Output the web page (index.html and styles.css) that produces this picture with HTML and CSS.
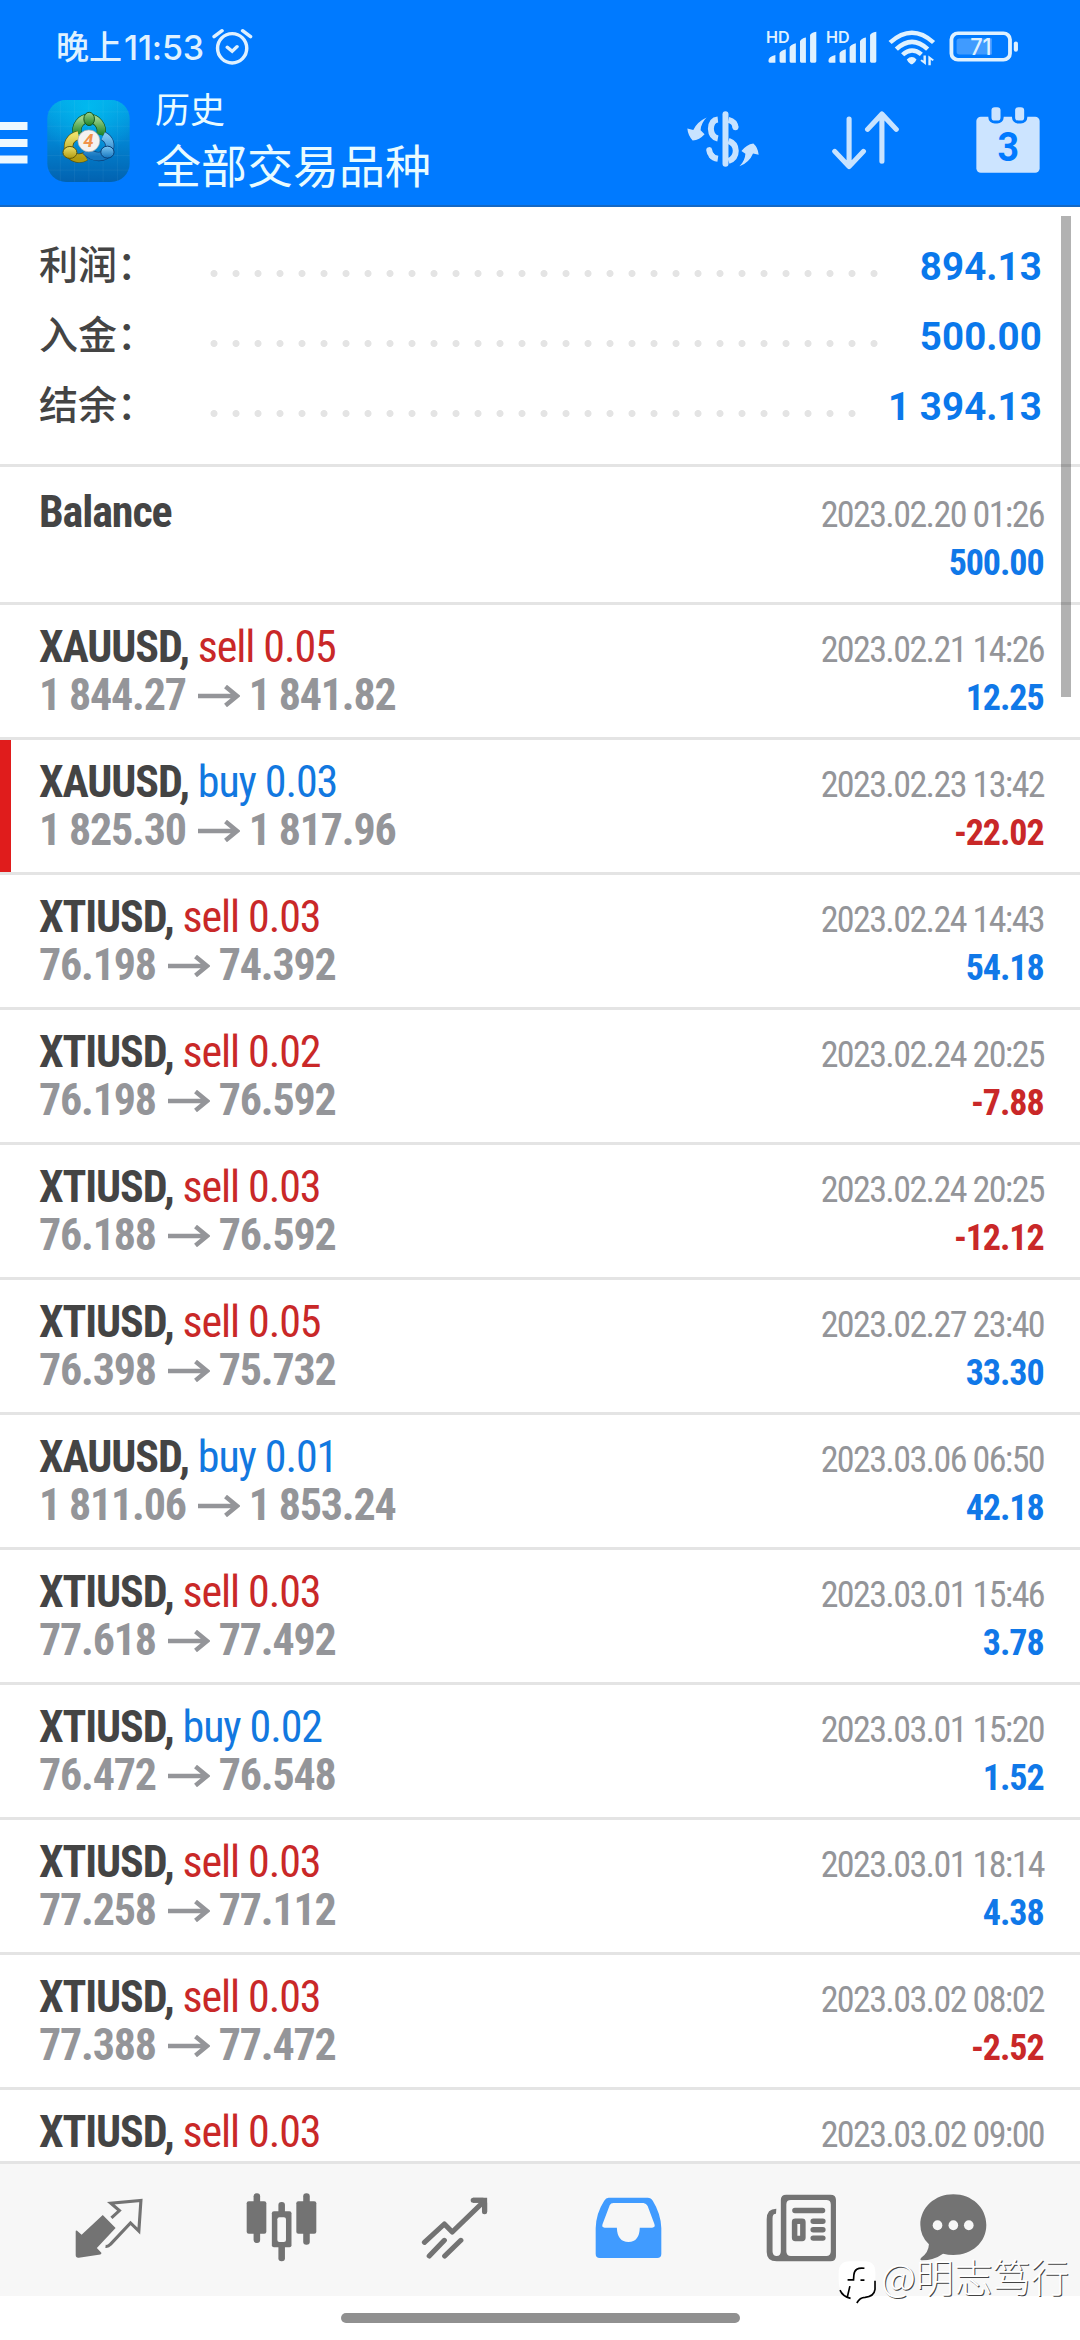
FILE: index.html
```
<!DOCTYPE html>
<html lang="zh-CN">
<head>
<meta charset="utf-8">
<title>历史</title>
<link rel="stylesheet" href="styles.css">
</head>
<body>
<div class="screen">
<header class="header">
  <div class="status">
    <span class="clock"><span>晚上</span><span class="clock-num">11:53</span></span>
    <svg class="alarm" viewBox="614 84 118 114" preserveAspectRatio="none" fill="none" stroke="#dff1ff" stroke-width="10" stroke-linecap="round"><ellipse cx="672" cy="145" rx="42" ry="44"/><path d="M658 142l14 12 14-14M620 110l23-18M725 110l-23-18"/></svg>
    <svg class="signal" viewBox="650 73 150 119" preserveAspectRatio="none" fill="#dff1ff"><text x="653" y="129" font-size="47" textLength="68" lengthAdjust="spacingAndGlyphs">HD</text><path d="M660 182q0-12 20-17v23h-16q-4 0-4-4zM692 160q3-8 18-12v40h-14q-4 0-4-4zM721 142q3-8 18-12v58h-14q-4 0-4-4zM751 124q3-8 17-11v75h-13q-4 0-4-4zM780 106q3-8 18-10v88q0 4-4 4h-10q-4 0-4-4z"/></svg>
    <svg class="signal" viewBox="650 73 150 119" preserveAspectRatio="none" fill="#dff1ff"><text x="653" y="129" font-size="47" textLength="68" lengthAdjust="spacingAndGlyphs">HD</text><path d="M660 182q0-12 20-17v23h-16q-4 0-4-4zM692 160q3-8 18-12v40h-14q-4 0-4-4zM721 142q3-8 18-12v58h-14q-4 0-4-4zM751 124q3-8 17-11v75h-13q-4 0-4-4zM780 106q3-8 18-10v88q0 4-4 4h-10q-4 0-4-4z"/></svg>
    <svg class="wifi" viewBox="1008 86 138 112" preserveAspectRatio="none" fill="none" stroke="#dff1ff" stroke-width="13"><path d="M1014 127q63-59 125 0M1032 147q45-44 90 0M1050 164q26-25 54-1"/><path fill="#dff1ff" stroke="none" d="M1062 178q15-14 28 0-3 8-11 14-3 2-6 0-8-6-11-14zM1117 166v29l-16-13 4-4 5 4v-16zM1124 196v-30l16 13-4 4-5-4v17z"/></svg>
    <svg class="battery" viewBox="1186 94 202 94" preserveAspectRatio="none"><rect x="1193" y="101" width="169" height="80" rx="19" fill="none" stroke="#dff1ff" stroke-width="11"/><path fill="#dff1ff" d="M1373 132q0-6 6-6t6 6v18q0 7-6 7t-6-7z"/><path fill="#409bff" d="M1216 117h94v48h-94q-8 0-8-8v-32q0-8 8-8z"/><text x="1247" y="166" font-size="68" font-weight="500" fill="#dff1ff" textLength="62" lengthAdjust="spacingAndGlyphs">71</text></svg>
  </div>
  <div class="toolbar">
    <svg class="menu" viewBox="0 0 28 42" fill="#ecf8ff"><path d="M0 0h27.5v8H0zM0 17h27.5v8H0zM0 33.500h27.500v8H0z"/></svg>
    <svg class="app" viewBox="20 24 248 247">
      <defs>
        <linearGradient id="bg" x1="0" y1="0" x2="0" y2="1"><stop offset="0" stop-color="#04a5e6"/><stop offset=".5" stop-color="#0284d2"/><stop offset="1" stop-color="#0262b0"/></linearGradient>
        <linearGradient id="gr" x1="0" y1="0" x2="0" y2="1"><stop offset="0" stop-color="#9ad38a"/><stop offset="1" stop-color="#1f8328"/></linearGradient>
        <linearGradient id="ye" x1="0" y1="0" x2="0" y2="1"><stop offset="0" stop-color="#ece06a"/><stop offset="1" stop-color="#b09a10"/></linearGradient>
        <linearGradient id="bl" x1="0" y1="0" x2="0" y2="1"><stop offset="0" stop-color="#7cc6f2"/><stop offset="1" stop-color="#1476c0"/></linearGradient>
        <radialGradient id="glow" cx=".5" cy=".1" r=".6"><stop offset="0" stop-color="#00bff2" stop-opacity=".8"/><stop offset="1" stop-color="#00bff2" stop-opacity="0"/></radialGradient>
      </defs>
      <rect x="20" y="24" width="248" height="247" rx="56" fill="url(#bg)"/><rect x="20" y="24" width="248" height="247" rx="56" fill="url(#glow)"/>
      <path d="M59 26v242M102 24v246M145 24v246M188 24v246M231 26v242M20 60h248M20 103h248M20 147h248M20 191h248M20 235h248" stroke="#fff" stroke-opacity=".08" stroke-width="2"/>
      <g fill="none">
        <path d="M111 127c-8-26 12-48 34-48s44 22 36 50" stroke="#15541c" stroke-width="28"/><path d="M111 127c-8-26 12-48 34-48s44 22 36 50" stroke="url(#gr)" stroke-width="24"/>
        <path d="M114 130c-26 6-34 26-29 48 8 22 32 26 50 16" stroke="#5e5608" stroke-width="28"/><path d="M114 130c-26 6-34 26-29 48 8 22 32 26 50 16" stroke="url(#ye)" stroke-width="24"/>
        <path d="M188 132c20 10 24 28 16 46-10 20-44 24-68-2" stroke="#0a3f78" stroke-width="28"/><path d="M188 132c20 10 24 28 16 46-10 20-44 24-68-2" stroke="url(#bl)" stroke-width="24"/>
      </g>
      <ellipse cx="146" cy="81" rx="16" ry="20" fill="url(#gr)" stroke="#15541c" stroke-width="3"/><ellipse cx="88" cy="182" rx="21" ry="18" fill="url(#ye)" stroke="#5e5608" stroke-width="3"/><ellipse cx="201" cy="181" rx="20" ry="18" fill="url(#bl)" stroke="#0a3f78" stroke-width="3"/>
      <circle cx="145" cy="147" r="33" fill="#f4f2f0" stroke="#aaa" stroke-width="2"/>
      <text x="144" y="167" text-anchor="middle" font-size="56" font-weight="700" font-style="italic" fill="#f0924a">4</text>
    </svg>
    <div class="titles"><div class="sub">历史</div><div class="main">全部交易品种</div></div>
    <svg class="currency" viewBox="48 65 217 167" fill="none" stroke="#c8e3ff" stroke-width="18"><path stroke-linecap="round" d="M164 74v149"/><path d="M141 90q-20 2-21 28 1 25 21 29M173 91q20 5 21 23"/><path d="M173 154q22 8 22 30 0 23-22 31"/><path stroke-linecap="round" d="M194 112v1M115 182q1 9 7 16"/><path d="M120 196q8 10 21 12"/><path fill="#c8e3ff" stroke="none" d="M107 84q-17 17-18 38l12 12q-15 17-36 19-14-15-16-36l18 4q12-24 40-37zM206 231q17-17 18-38l-12-8q15-20 36-23 14 12 16 34l-17-4q-11 27-41 39z"/></svg>
    <svg class="sort" viewBox="846 334 196 177" preserveAspectRatio="none" fill="none" stroke="#c8e3ff" stroke-width="15" stroke-linecap="round" stroke-linejoin="round"><path d="M896 358v142M854 455l42 46 42-46M992 485V343M950 389l42-46 42 46"/></svg>
    <svg class="calendar" viewBox="1267 322 184 197" preserveAspectRatio="none"><rect x="1268" y="351" width="182" height="167" rx="13" fill="#cce4ff"/><g fill="#cce4ff" stroke="#007aff" stroke-width="9"><rect x="1307" y="318" width="35" height="49" rx="14"/><rect x="1375" y="318" width="35" height="49" rx="14"/></g><text x="1360" y="483" text-anchor="middle" font-size="122" font-weight="700" fill="#007aff" textLength="62" lengthAdjust="spacingAndGlyphs">3</text></svg>
  </div>
</header>

<main class="content">
  <section class="summary">
    <div class="sum"><span class="label">利润：</span><i class="dots"></i><b>894.13</b></div>
    <div class="sum"><span class="label">入金：</span><i class="dots"></i><b>500.00</b></div>
    <div class="sum"><span class="label">结余：</span><i class="dots short"></i><b>1 394.13</b></div>
  </section>
  <div class="deals" id="deals"></div>
  <div class="scrollbar"></div>
</main>

<nav class="tabs">
  <svg width="68" height="62" viewBox="217 354 196 182" preserveAspectRatio="none" fill="#737373"><path d="M297 407l37 38-54 59 13 14q1 4-3 5l-62 9q-9 1-9-8v-69q0-4 4-2l13 12z"/><path d="M322 415l23-21-25-22 87-8-6 90-24-24-58 63q-6 7-14 6" fill="none" stroke="#737373" stroke-width="9"/></svg>
  <svg width="71" height="69" viewBox="713 341 206 207" preserveAspectRatio="none" fill="#737373"><rect x="735" y="342" width="19" height="149" rx="9"/><rect x="715" y="366" width="57" height="97" rx="6"/><rect x="879" y="342" width="19" height="154" rx="9"/><rect x="859" y="366" width="58" height="97" rx="6"/><rect x="807" y="368" width="19" height="178" rx="9"/><rect x="788" y="396" width="57" height="108" rx="6"/><rect x="804" y="414" width="25" height="74" rx="6" fill="#f7f7f7"/></svg>
  <svg width="67" height="62" viewBox="1221 348 195 186" preserveAspectRatio="none" fill="none" stroke="#737373" stroke-width="15" stroke-linecap="round" stroke-linejoin="round"><path d="M1231 484l58-55 23 24 91-91M1245 525l44-47M1290 525l47-47"/><path stroke-linejoin="miter" stroke-linecap="butt" d="M1372 358h34v34"/><path d="M1373 358h28M1406 366v26"/></svg>
  <svg width="67" height="62" viewBox="156 348 196 186" preserveAspectRatio="none" fill="#409bff"><path fill-rule="evenodd" d="M196 350h114q10 0 15 9 24 40 25 82v78q0 12-12 12H170q-12 0-12-12v-78q1-44 25-82 5-9 13-9zM210 366q-8 0-11 7l-21 57q-3 10 6 10h36q1 42 34 43 32-1 33-43h36q10 0 7-10l-20-55q-4-8-12-9z"/></svg>
  <svg width="71" height="68" viewBox="655 340 206 202" preserveAspectRatio="none" fill="#737373"><path fill-rule="evenodd" d="M714 342h128q16 0 16 16v166q0 16-16 16H686q-29 0-29-28V415q0-31 28-31l-1 15q-10 0-10 13v98q0 14 12 14 12 0 12-14V358q0-16 16-16zM727 358q-13 0-13 13v139q0 14 13 14h103q13 0 13-14V371q0-13-13-13z"/><path d="M739 389h80M792 421h28M792 446h28M792 471h28" stroke="#737373" stroke-width="16" stroke-linecap="round"/><path fill-rule="evenodd" d="M740 413h20q10 0 10 10v47q0 10-10 10h-20q-10 0-10-10v-47q0-10 10-10zm6 16v35h8v-35z"/></svg>
  <svg width="67" height="67" viewBox="1102 341 195 201" preserveAspectRatio="none"><path fill="#737373" d="M1199 342c54 0 96 40 96 92s-42 90-96 90q-15 0-30-4-25 19-62 20-8-1 0-9 20-15 21-39-25-24-25-58c0-52 42-92 96-92z"/><g fill="#f7f7f7"><ellipse cx="1153" cy="435" rx="14" ry="15"/><ellipse cx="1199" cy="435" rx="14" ry="15"/><ellipse cx="1244" cy="435" rx="14" ry="15"/></g></svg>
</nav>
<footer class="gesture"><div class="pill"></div></footer>
<div class="watermark">
  <svg viewBox="24 30 118 134"><path d="M60 33h45q32 0 32 32v45q0 30-36 34-14 2-22 16v-18q-20 2-38-7Q26 120 26 90V67q0-34 34-34z" fill="#fff"/><path fill="none" stroke="#000" stroke-width="5" d="M104 54q-30-4-32 20l-1 15H53M92 90h12M60 108l-8 34M62 145q-24-6-32-25M136 92v26q-3 22-30 24-16 0-25 17"/></svg>
  <span>@明志笃行</span>
</div>
</div>
<script src="deals.js"></script>
</body>
</html>
```
FILE: deals.js
```
const deals = [
  ['XAUUSD', 'sell', '0.05', '1 844.27', '1 841.82', '2023.02.21 14:26', '12.25'],
  ['XAUUSD', 'buy', '0.03', '1 825.30', '1 817.96', '2023.02.23 13:42', '-22.02', 'marked'],
  ['XTIUSD', 'sell', '0.03', '76.198', '74.392', '2023.02.24 14:43', '54.18'],
  ['XTIUSD', 'sell', '0.02', '76.198', '76.592', '2023.02.24 20:25', '-7.88'],
  ['XTIUSD', 'sell', '0.03', '76.188', '76.592', '2023.02.24 20:25', '-12.12'],
  ['XTIUSD', 'sell', '0.05', '76.398', '75.732', '2023.02.27 23:40', '33.30'],
  ['XAUUSD', 'buy', '0.01', '1 811.06', '1 853.24', '2023.03.06 06:50', '42.18'],
  ['XTIUSD', 'sell', '0.03', '77.618', '77.492', '2023.03.01 15:46', '3.78'],
  ['XTIUSD', 'buy', '0.02', '76.472', '76.548', '2023.03.01 15:20', '1.52'],
  ['XTIUSD', 'sell', '0.03', '77.258', '77.112', '2023.03.01 18:14', '4.38'],
  ['XTIUSD', 'sell', '0.03', '77.388', '77.472', '2023.03.02 08:02', '-2.52'],
  ['XTIUSD', 'sell', '0.03', '', '', '2023.03.02 09:00', '']
];
const arrow = '<svg class="arrow" viewBox="0 0 42 22" fill="none" stroke="#949599" stroke-width="4.500"><path d="M0 11h38M27.500 1.500L39 11 27.500 20.500"/></svg>';
const row = (left, prices, date, profit, extra) => `<div class="deal ${extra}">
  <div class="left"><div class="name">${left}</div><div class="prices">${prices}</div></div>
  <div class="right"><div class="date">${date}</div><div class="profit ${profit[0] === '-' ? 'loss' : ''}">${profit}</div></div></div>`;
document.getElementById('deals').innerHTML =
  row('<b>Balance</b>', '', '2023.02.20 01:26', '500.00', 'balance') +
  deals.map(([sym, side, lot, from, to, date, profit, mark]) =>
    row(`<b>${sym},</b> <span class="${side}">${side} ${lot}</span>`,
      from && `<span>${from}</span>${arrow}<span>${to}</span>`, date, profit, mark || '')).join('');
```
FILE: styles.css
```
* { box-sizing: border-box; }
body { margin: 0; background: #fff; font-family: Roboto, "Noto Sans CJK SC", sans-serif; }
svg { display: block; flex: none; }
.screen { position: relative; width: 1080px; height: 2340px; display: flex; flex-direction: column; overflow: hidden; }

.header { height: 207px; flex: none; background: #007aff; border-bottom: 2px solid #1468c4; }
.status { height: 93px; padding: 0 61px 0 56px; display: flex; align-items: flex-start; }
.clock { display: flex; margin-top: 23px; height: 50px; line-height: 50px; font-size: 33px; font-weight: 500; color: #dff1ff; width: 156px; white-space: nowrap; }
.clock-num { font-family: Inter, "Noto Sans CJK SC", sans-serif; font-size: 34px; letter-spacing: -.2px; margin-left: 2px; }
.alarm { width: 41px; height: 38px; margin-top: 28px; }
.signal { width: 52px; height: 40px; margin: 24px 8px 0 0; font-family: Inter, sans-serif; font-weight: 600; overflow: visible; }
.alarm + .signal { margin-left: auto; }
.wifi { width: 48px; height: 37px; margin: 29px 13px 0 3px; }
.battery { width: 70px; height: 31px; margin-top: 31px; font-family: Inter, sans-serif; }
.toolbar { display: flex; align-items: flex-start; padding-right: 40px; }
.menu { width: 28px; height: 42px; margin-top: 29px; }
.app { width: 83px; height: 82px; margin: 7px 0 0 19px; }
.titles { margin-left: 25px; margin-top: 1px; color: #e9fbff; flex: 1; }
.sub { font-size: 35px; line-height: 35px; }
.main { font-size: 46px; line-height: 46px; margin-top: 15px; }
.currency { width: 72px; height: 56px; margin-top: 18px; }
.sort { width: 67px; height: 59px; margin: 18px 0 0 73px; }
.calendar { width: 64px; height: 66px; margin: 14px 0 0 77px; }

.content { position: relative; height: 1954px; flex: none; overflow: hidden; }
.summary { height: 260px; padding: 24px 38px 0 39px; border-bottom: 3px solid #e4e4e4; }
.sum { display: flex; height: 70px; line-height: 71px; color: #444; }
.label { width: 164px; font-size: 39px; font-weight: 500; }
.dots { width: 682px; height: 7px; margin: 39px auto 0 0; background: radial-gradient(circle, #e4e4e4 3.100px, transparent 3.900px) 0 0 / 22px 7px repeat-x; }
.dots.short { width: 660px; }
.sum b { font-size: 38.500px; color: #0a78eb; letter-spacing: .1px; }
.deal { height: 135px; padding: 18px 38px 0 39px; display: flex; justify-content: space-between; border-bottom: 3px solid #e4e4e4; font-stretch: 75%; }
.balance { height: 138px; padding-top: 21px; }
.marked { box-shadow: inset 11px 0 #e01c1c; }
.name, .prices { font-size: 44px; line-height: 48px; height: 48px; white-space: nowrap; }
.name { letter-spacing: -1.100px; color: #444; }
.sell { color: #c92828; }
.buy { color: #1278e0; }
.prices { display: flex; color: #949599; font-weight: 700; letter-spacing: -1.200px; }
.arrow { width: 42px; height: 22px; margin: 14px 9px 0 12px; }
.right { padding-top: 3px; text-align: right; font-size: 36px; line-height: 48px; }
.date { color: #949599; letter-spacing: -1.600px; margin-right: -2px; }
.profit { color: #1078e8; font-weight: 700; letter-spacing: -1.100px; margin-right: -1.500px; }
.loss { color: #c92828; }
.scrollbar { position: absolute; left: 1061px; top: 9px; width: 10px; height: 481px; background: rgba(0, 0, 0, .3); }

.tabs { height: 135px; flex: none; background: #f7f7f7; border-top: 3px solid #e4e4e4; display: grid; grid-template-columns: repeat(5, 173.200px) 131px; padding: 0 0 5px 22px; align-items: center; justify-items: center; }
.gesture { flex: 1; display: flex; justify-content: center; padding-top: 17px; }
.pill { width: 399px; height: 10px; border-radius: 5px; background: #909090; }
.watermark { position: absolute; left: 838px; top: 2260px; display: flex; }
.watermark svg { width: 39px; height: 45px; }
.watermark span { margin-left: 4px; margin-top: -4px; font: 300 38.300px/40px "Noto Sans CJK SC", sans-serif; color: #fff; text-shadow: 1px 1px 0 #444; }
```
